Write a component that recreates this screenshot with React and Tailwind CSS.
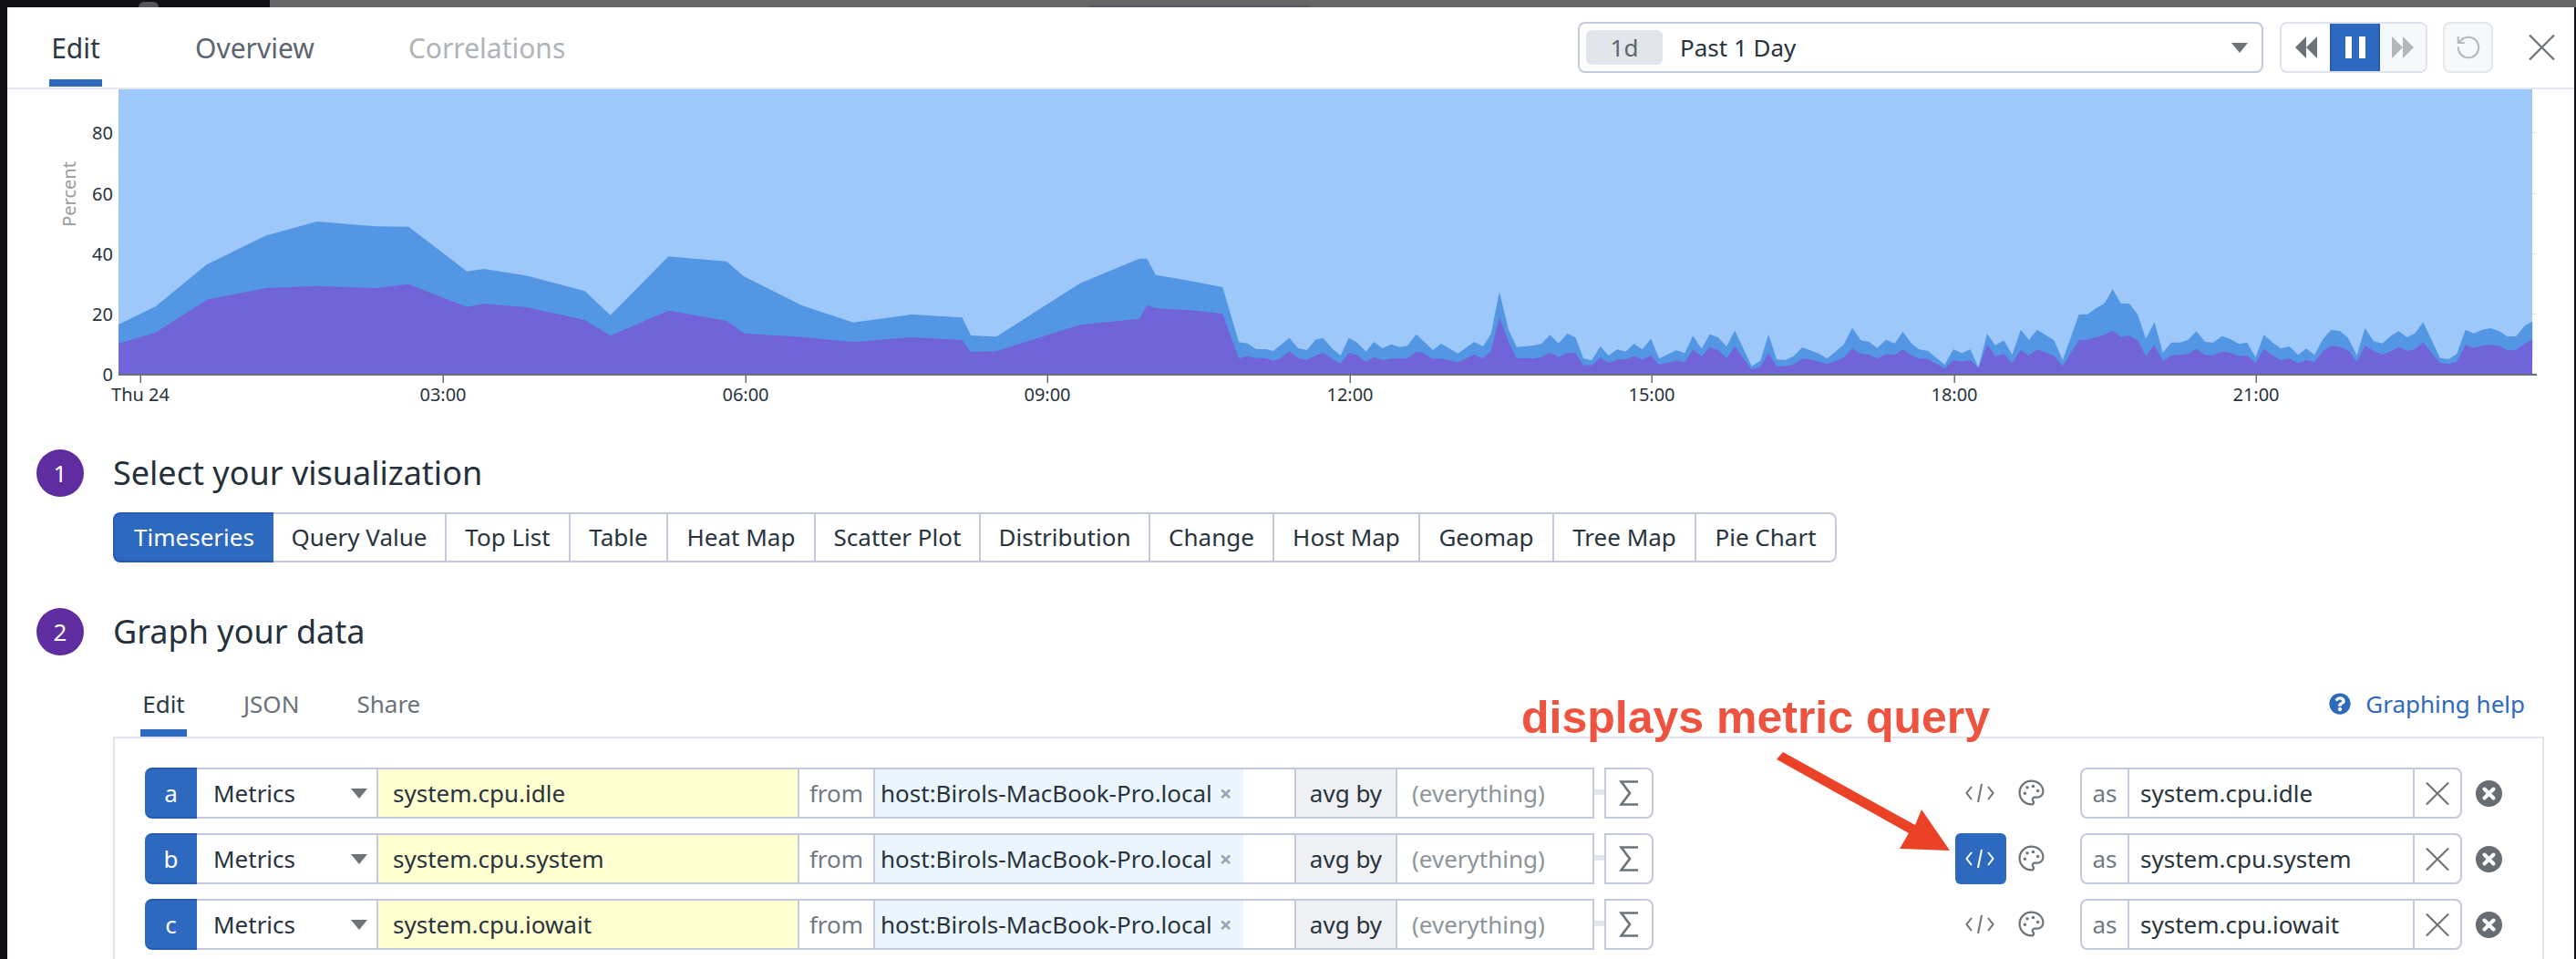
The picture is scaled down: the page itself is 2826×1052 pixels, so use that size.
import { Palette, RotateCcw } from "lucide-react";
import { FaQuestionCircle } from "react-icons/fa";

// traced from the reference, [x, y] in crop space; converted to page coords below
const toPage = (flat, off, sx) => {
  const out = [];
  for (let i = 0; i < flat.length; i += 2) {
    out.push(`${(off + flat[i] / sx).toFixed(1)},${(flat[i + 1] / 3).toFixed(1)}`);
  }
  return out;
};

const top1 = [204,1068,268,1008,356,870,458,775,545,729,645,745,703,746,803,893,832,885,905,907,1006,958,1050,1037,1150,844,1250,860,1280,910,1380,1006,1468,1061,1568,1035];
const top2 = [87,1045,102,1104,146,1108,290,932,392,851,405,851,420,905,480,925,535,945,563,1126,578,1130,593,1149,610,1149,622,1155,650,1112,665,1146,680,1152,695,1118,708,1112,725,1150,738,1170,752,1112,765,1125,782,1157,795,1125,810,1146,825,1133,840,1142,853,1138,868,1100,897,1152,911,1131,940,1163,968,1125,983,1140,997,1098,1011,960,1027,1085,1041,1142,1070,1137,1084,1131,1098,1102,1113,1130,1128,1098,1142,1110,1156,1180,1170,1186,1185,1140,1199,1170,1214,1150,1228,1157,1243,1132,1257,1150,1272,1115,1286,1180];
const top3 = [20,1153,35,1162,49,1105,64,1148,78,1100,92,1110,107,1140,121,1088,150,1205,165,1187,179,1100,193,1183,208,1185,222,1172,237,1143,265,1163,280,1180,308,1135,323,1079,338,1120,352,1125,366,1145,381,1118,396,1130,410,1092,425,1130,438,1150,453,1155,482,1200,497,1150,512,1162,526,1150,540,1210,555,1098,569,1136,584,1120,598,1168,613,1085,627,1118,641,1085,670,1120,685,1185,713,1035,728,1034,742,1015,757,998,771,952,785,998,800,1000,814,1035,828,1115,843,1060,857,1160,872,1127,887,1127,901,1118,915,1090,930,1125,944,1127,959,1106,973,1115,988,1132,1002,1127,1017,1175,1031,1102,1046,1127,1060,1147,1075,1140,1090,1168,1104,1147,1118,1168,1133,1115,1147,1085,1162,1090,1176,1112,1191,1170,1205,1080,1220,1123,1235,1130,1250,1105,1263,1090,1277,1110,1291,1097,1305,1060,1334,1178,1349,1182,1363,1165,1378,1085,1392,1097,1407,1085,1421,1080,1436,1090,1450,1107,1465,1107,1480,1072,1493,1058];

const low1 = [204,1130,268,1094,356,986,458,948,545,941,645,948,703,935,803,1010,832,1000,905,1011,1006,1053,1050,1105,1150,1022,1250,1056,1280,1097,1380,1109,1468,1126,1568,1110];
const low2 = [87,1119,102,1158,146,1156,290,1069,392,1049,405,1005,420,1014,480,1021,535,1032,563,1180,578,1172,593,1178,610,1178,622,1188,635,1178,650,1156,665,1178,680,1185,695,1170,708,1161,725,1183,738,1196,752,1162,765,1168,782,1190,795,1175,810,1185,825,1180,853,1180,868,1157,880,1162,897,1181,911,1180,940,1192,968,1167,983,1180,997,1155,1011,1045,1027,1125,1041,1180,1055,1178,1070,1180,1084,1175,1098,1160,1113,1175,1128,1161,1142,1162,1156,1202,1170,1202,1185,1177,1199,1195,1214,1183,1228,1183,1243,1172,1257,1183,1272,1170,1286,1200];
const low3 = [20,1187,35,1192,49,1151,64,1172,78,1142,92,1152,107,1178,121,1140,150,1217,165,1207,179,1162,193,1205,208,1205,222,1200,237,1180,250,1183,280,1198,308,1178,323,1147,338,1165,352,1167,366,1180,381,1165,396,1168,410,1150,425,1170,438,1180,453,1182,482,1213,497,1185,512,1190,526,1185,540,1212,555,1135,569,1172,584,1165,598,1195,613,1153,627,1170,641,1150,670,1170,685,1205,713,1120,728,1118,742,1110,757,1102,771,1088,785,1108,800,1105,814,1120,828,1172,843,1135,857,1188,872,1170,887,1168,901,1165,915,1148,930,1168,944,1170,959,1157,973,1160,988,1172,1002,1170,1017,1195,1031,1148,1046,1170,1060,1185,1075,1180,1090,1195,1104,1185,1118,1192,1133,1155,1147,1138,1162,1142,1176,1152,1191,1190,1205,1138,1220,1155,1235,1168,1250,1155,1263,1142,1277,1155,1291,1150,1305,1127,1334,1195,1349,1198,1363,1190,1378,1135,1392,1145,1407,1137,1421,1135,1436,1138,1450,1152,1465,1152,1480,1130,1493,1118];

const area = (a, b, c) =>
  ["130,410", ...toPage(a, 0, 1.568), ...toPage(b, 1000, 1.568), ...toPage(c, 1826, 1.568), "2778,410"].join(" ");

const yTicks = [
  { label: "80", y: 145 },
  { label: "60", y: 212 },
  { label: "40", y: 278 },
  { label: "20", y: 344 },
  { label: "0", y: 410 },
];
const xTicks = [
  { label: "Thu 24", x: 154 },
  { label: "03:00", x: 486 },
  { label: "06:00", x: 818 },
  { label: "09:00", x: 1149 },
  { label: "12:00", x: 1481 },
  { label: "15:00", x: 1812 },
  { label: "18:00", x: 2144 },
  { label: "21:00", x: 2475 },
];

const vizTypes = [
  { name: "Query Value", w: "w-[190px]" },
  { name: "Top List", w: "w-[136px]" },
  { name: "Table", w: "w-[107px]" },
  { name: "Heat Map", w: "w-[162px]" },
  { name: "Scatter Plot", w: "w-[181px]" },
  { name: "Distribution", w: "w-[186px]" },
  { name: "Change", w: "w-[136px]" },
  { name: "Host Map", w: "w-[160px]" },
  { name: "Geomap", w: "w-[147px]" },
  { name: "Tree Map", w: "w-[156px]" },
];

const queries = [
  { letter: "a", metric: "system.cpu.idle" },
  { letter: "b", metric: "system.cpu.system", active: true },
  { letter: "c", metric: "system.cpu.iowait" },
];

function Triangle() {
  return (
    <svg width="18" height="11" viewBox="0 0 18 11" className="fill-[#6b7278]">
      <path d="M0 0h18l-9 11z" />
    </svg>
  );
}

function Cross({ w, h }) {
  return (
    <svg width={w} height={h} viewBox="0 0 28 26" className="stroke-[#6b7278]" fill="none" strokeWidth="2.2">
      <path d="M1 0 27 26M27 0 1 26" />
    </svg>
  );
}

function CodeIcon({ active }) {
  return (
    <svg
      width="32"
      height="22"
      viewBox="0 0 32 22"
      fill="none"
      strokeWidth="2"
      className={active ? "stroke-white" : "stroke-[#6b7278]"}
    >
      <path d="M7 4 1.5 11 7 18M18 1l-4 20M25 4l5.5 7-5.5 7" />
    </svg>
  );
}

function StepHeading({ n, title }) {
  return (
    <div className="ml-[32px] flex h-[52px] items-center gap-[32px]">
      <div className="flex h-[52px] w-[52px] items-center justify-center rounded-full bg-[#5f2d9f] text-[26px] text-white">
        {n}
      </div>
      <h2 className="text-[36px] font-normal leading-[52px] text-[#25303b]">{title}</h2>
    </div>
  );
}

function QueryRow({ letter, metric, active }) {
  return (
    <div className="flex h-[56px] text-[26px] text-[#28333d]">
      <div className="flex w-[57px] items-center justify-center rounded-l-[8px] border-y-2 border-[#2559b5] bg-[#2d69bf] text-white">
        {letter}
      </div>
      <div className="flex w-[1533px] border-y-2 border-r-2 border-[#c5c9de]">
        <div className="flex w-[199px] items-center justify-between border-r-2 border-[#c5c9de] pl-[18px] pr-[10px]">
          Metrics
          <Triangle />
        </div>
        <div className="flex w-[462px] items-center border-r-2 border-[#c5c9de] bg-[#ffffd1] pl-[16px]">{metric}</div>
        <div className="flex w-[83px] items-center justify-center border-r-2 border-[#c5c9de] text-[#72797f]">from</div>
        <div className="flex w-[404px] items-center gap-[8px] bg-[#ebf5fc] pl-[6px]">
          host:Birols-MacBook-Pro.local
          <span className="text-[24px] font-bold leading-none text-[#9aa2b8]">×</span>
        </div>
        <div className="w-[56px]" />
        <div className="flex w-[113px] items-center justify-center border-x-2 border-[#c5c9de] bg-[#eef0f4]">avg by</div>
        <div className="flex flex-1 items-center pl-[16px] text-[#8e9499]">(everything)</div>
      </div>
      <div className="mt-[24px] h-[6px] w-[11px] bg-[#e4e6ee]" />
      <div className="flex w-[54px] items-center justify-center rounded-r-[8px] border-2 border-[#c5c9de]">
        <svg width="22" height="28" viewBox="0 0 22 28" fill="none" strokeWidth="2.6" className="stroke-[#6b7278]">
          <path d="M21 1.5H2.5L12 14 2.5 26.5H21" />
        </svg>
      </div>
      <div
        className={`ml-[331px] flex w-[56px] items-center justify-center rounded-[6px] pr-[2px] ${active ? "bg-[#2d69bf]" : ""}`}
      >
        <CodeIcon active={active} />
      </div>
      <div className="flex w-[56px] items-center justify-center pr-[2px]">
        <Palette size={31} strokeWidth={1.7} className="mb-[2px] text-[#6b7278]" />
      </div>
      <div className="ml-[25px] flex w-[419px] rounded-[8px] border-2 border-[#c5c9de]">
        <div className="flex w-[52px] items-center justify-center border-r-2 border-[#c5c9de] text-[#72797f]">as</div>
        <div className="flex w-[311px] items-center pl-[12px]">{metric}</div>
        <div className="flex flex-1 items-center justify-center border-l-2 border-[#c5c9de]">
          <Cross w={26} h={25} />
        </div>
      </div>
      <div className="ml-[15px] flex items-center">
        <svg width="29" height="29" viewBox="0 0 29 29">
          <circle cx="14.5" cy="14.5" r="14.5" fill="#686d73" />
          <path d="M9.5 9.5l10 10M19.5 9.5l-10 10" stroke="#fff" strokeWidth="4" strokeLinecap="round" />
        </svg>
      </div>
    </div>
  );
}

export default function App() {
  return (
    <div className="relative flex h-[1052px] w-[2826px] flex-col overflow-hidden bg-[#121116] font-['Noto_Sans',sans-serif]">
      {/* strip of the window behind the modal */}
      <div className="flex h-[8px] shrink-0">
        <div className="flex w-[296px] justify-start pl-[152px] pt-[2px]">
          <div className="h-[12px] w-[22px] rounded-full bg-[#56565a]" />
        </div>
        <div className="flex flex-1 items-end bg-[#666666] pl-[899px]">
          <div className="h-[2px] w-[242px] rounded-t-[3px] bg-[#565a60]" />
        </div>
      </div>

      <div className="z-10 flex min-h-0 flex-1">
        <div className="w-[8px] shrink-0 bg-[#121116]" />
        <main className="flex min-w-0 flex-1 flex-col bg-white">
          {/* Header */}
          <header className="flex h-[90px] shrink-0 items-start border-b-2 border-[#e4e6ee] pl-[46px] pr-[21px]">
            <nav className="flex text-[30px]">
              <div className="flex h-[87px] w-[58px] items-center justify-center border-b-8 border-[#2d69bf] pt-[9px] text-[#2c3a45]">Edit</div>
              <div className="ml-[102px] flex h-[87px] items-center pb-[8px] pt-[9px] text-[#5c6670]">Overview</div>
              <div className="ml-[103px] flex h-[87px] items-center pb-[8px] pt-[9px] text-[#b0b4b8]">Correlations</div>
            </nav>

            <div className="ml-auto mt-[16px] flex h-[56px] items-stretch">
              <div className="flex w-[752px] items-center rounded-[8px] border-2 border-[#c5c9de] pl-[7px] pr-[15px]">
                <div className="flex h-[38px] w-[84px] items-center justify-center rounded-[6px] bg-[#e2e5ec] text-[26px] text-[#5c6670]">1d</div>
                <span className="ml-[19px] text-[26px] text-[#28333d]">Past 1 Day</span>
                <span className="ml-auto flex">
                  <Triangle />
                </span>
              </div>

              <div className="ml-[18px] flex w-[162px] overflow-hidden rounded-[8px] border-2 border-[#dfe2ec]">
                <div className="flex w-[53px] items-center justify-center">
                  <svg width="24" height="24" viewBox="0 0 24 24" className="fill-[#6b7278]">
                    <path d="M12 0v24L0 12zM24 0v24L12 12z" />
                  </svg>
                </div>
                <div className="-my-[2px] flex w-[55px] items-center justify-center gap-[8px] border-2 border-[#2559b5] bg-[#2d69bf]">
                  <div className="h-[24px] w-[7px] bg-white" />
                  <div className="h-[24px] w-[7px] bg-white" />
                </div>
                <div className="flex flex-1 items-center justify-center bg-[#f7f8fa]">
                  <svg width="24" height="24" viewBox="0 0 24 24" className="fill-[#b3b7ba]">
                    <path d="M0 0v24l12-12zM12 0v24l12-12z" />
                  </svg>
                </div>
              </div>

              <div className="ml-[17px] flex w-[55px] items-center justify-center rounded-[8px] border-2 border-[#e4e6ee] bg-[#f7f8fa]">
                <RotateCcw size={30} strokeWidth={1.6} className="text-[#b5b9bc]" />
              </div>

              <div className="ml-[39px] flex items-center">
                <Cross w={29} h={28} />
              </div>
            </div>
          </header>

          {/* Chart */}
          <svg viewBox="8 98 2816 370" className="block h-[370px] w-[2816px] shrink-0">
            <rect x="130" y="98" width="2648" height="312" fill="#9fc8fa" />
            <polygon points={area(top1, top2, top3)} fill="#5296e4" />
            <polygon points={area(low1, low2, low3)} fill="#7163d8" />
            <rect x="130" y="410" width="2653" height="2" fill="#6b6f7c" />
            {yTicks.slice(0, 4).map((t) => (
              <rect key={t.y} x="2778" y={t.y} width="5" height="1" fill="#e4e6ee" />
            ))}
            {yTicks.map((t) => (
              <text key={t.label} x="124" y={t.y + 8} textAnchor="end" fontSize="20" fill="#28333d">
                {t.label}
              </text>
            ))}
            <text transform="translate(83 213) rotate(-90)" textAnchor="middle" fontSize="20" fill="#989ba0">
              Percent
            </text>
            {xTicks.map((t) => (
              <g key={t.label}>
                <rect x={t.x - 0.5} y="412" width="1.5" height="8" fill="#6b6f7c" />
                <text x={t.x} y="440" textAnchor="middle" fontSize="20" fill="#28333d">
                  {t.label}
                </text>
              </g>
            ))}
          </svg>

          {/* Step 1 */}
          <section className="shrink-0 pt-[25px]">
            <StepHeading n="1" title="Select your visualization" />
            <div className="ml-[116px] mt-[17px] flex h-[55px] w-[1891px] text-[26px] text-[#28333d]">
              <div className="flex w-[176px] items-center justify-center rounded-l-[8px] border-2 border-r-0 border-[#2559b5] bg-[#2d69bf] text-white">
                Timeseries
              </div>
              <div className="flex flex-1 rounded-r-[8px] border-y-2 border-r-2 border-[#c5c9de]">
                {vizTypes.map((v) => (
                  <div key={v.name} className={`flex ${v.w} items-center justify-center border-r-2 border-[#c5c9de]`}>
                    {v.name}
                  </div>
                ))}
                <div className="flex flex-1 items-center justify-center">Pie Chart</div>
              </div>
            </div>
          </section>

          {/* Step 2 */}
          <section className="flex min-h-0 flex-1 flex-col pt-[50px]">
            <StepHeading n="2" title="Graph your data" />
            <div className="mt-[25px] flex h-[64px] shrink-0 items-stretch pl-[146px] pr-[54px] text-[26px]">
              <div className="flex w-[51px] items-center justify-center border-b-8 border-[#2d69bf] text-[#2c3a45]">Edit</div>
              <div className="ml-[62px] flex items-center pb-[8px] text-[#6b7278]">JSON</div>
              <div className="ml-[63px] flex items-center pb-[8px] text-[#6b7278]">Share</div>
              <div className="ml-auto flex items-center gap-[16px] pb-[8px] text-[#2d69bf]">
                <FaQuestionCircle size={24} />
                Graphing help
              </div>
            </div>
            <div className="ml-[116px] flex w-[2667px] flex-1 flex-col gap-[16px] border-x-2 border-t-2 border-[#e2e6ec] pl-[33px] pt-[32px]">
              {queries.map((q) => (
                <QueryRow key={q.letter} {...q} />
              ))}
            </div>
          </section>
        </main>
        <div className="w-[2px] shrink-0 bg-[#121116]" />
      </div>

      {/* Annotation drawn over the screenshot */}
      <div className="absolute left-[1669px] top-[754px] z-20 whitespace-nowrap font-['Liberation_Sans',sans-serif] text-[50px] font-bold leading-[66px] text-[#ef5340]">
        displays metric query
      </div>
      <svg className="absolute left-[1940px] top-[815px] z-20" width="210" height="125" viewBox="1940 815 210 125">
        <path d="M1949 833 1956 825 2101 905 2108 888 2139 933 2084 931 2094 914z" fill="#eb4126" />
      </svg>
    </div>
  );
}
